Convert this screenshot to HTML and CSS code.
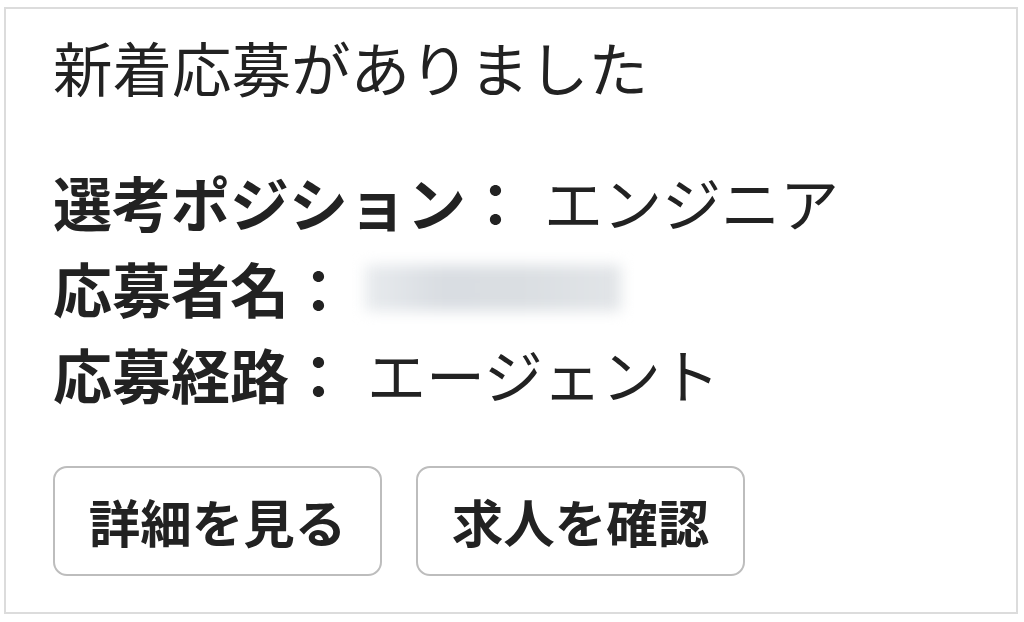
FILE: index.html
```html
<!DOCTYPE html>
<html lang="ja">
<head>
  <meta charset="UTF-8" />
  <meta name="viewport" content="width=device-width, initial-scale=1.0"/>
  <title>新着応募</title>
  <link rel="stylesheet" href="styles.css">
</head>
<body>

  <div class="card">
    <div class="title">新着応募がありました</div>

    <div class="details">
      <div class="row"><span class="label">選考ポジション：</span><span class="value">エンジニア</span></div>
      <div class="row"><span class="label">応募者名：</span><span class="value masked"></span></div>
      <div class="row"><span class="label">応募経路：</span><span class="value">エージェント</span></div>
    </div>

    <div class="actions">
      <button class="btn">詳細を見る</button>
      <button class="btn">求人を確認</button>
    </div>
  </div>

</body>
</html>
```

FILE: styles.css
```css
* {
  box-sizing: border-box;
}

body {
  margin: 0;
  background: #fff;
  color: #222;
  font-family: "Noto Sans CJK JP", "Noto Sans", sans-serif;
}

.card {
  margin: 7px 0 0 4px;
  width: 1014px;
  height: 607px;
  border: 2px solid #dcdcdc;
  padding: 14px 46px 0 47px;
}

.title {
  font-size: 59.5px;
  line-height: 86px;
  font-weight: 400;
}

.details {
  margin-top: 50px;
  font-size: 59px;
  line-height: 86px;
}

.row {
  display: flex;
  align-items: center;
}

.label {
  font-weight: 700;
}

.value {
  margin-left: 19px;
}

/* name is hidden behind a soft blur */
.masked {
  display: inline-block;
  width: 256px;
  height: 46px;
  margin-left: 17px;
  background: linear-gradient(90deg, #e8ebee, #d9dde2 30%, #dadee2 60%, #e2e5e8);
  filter: blur(7px);
}

.actions {
  margin-top: 49px;
  display: flex;
  gap: 34px;
}

.btn {
  width: 329px;
  height: 110px;
  padding: 0;
  border: 2px solid #bdbdbd;
  border-radius: 14px;
  background: #fff;
  color: #222;
  font-family: inherit;
  font-size: 51.5px;
  font-weight: 700;
  line-height: 76px;
}
```
